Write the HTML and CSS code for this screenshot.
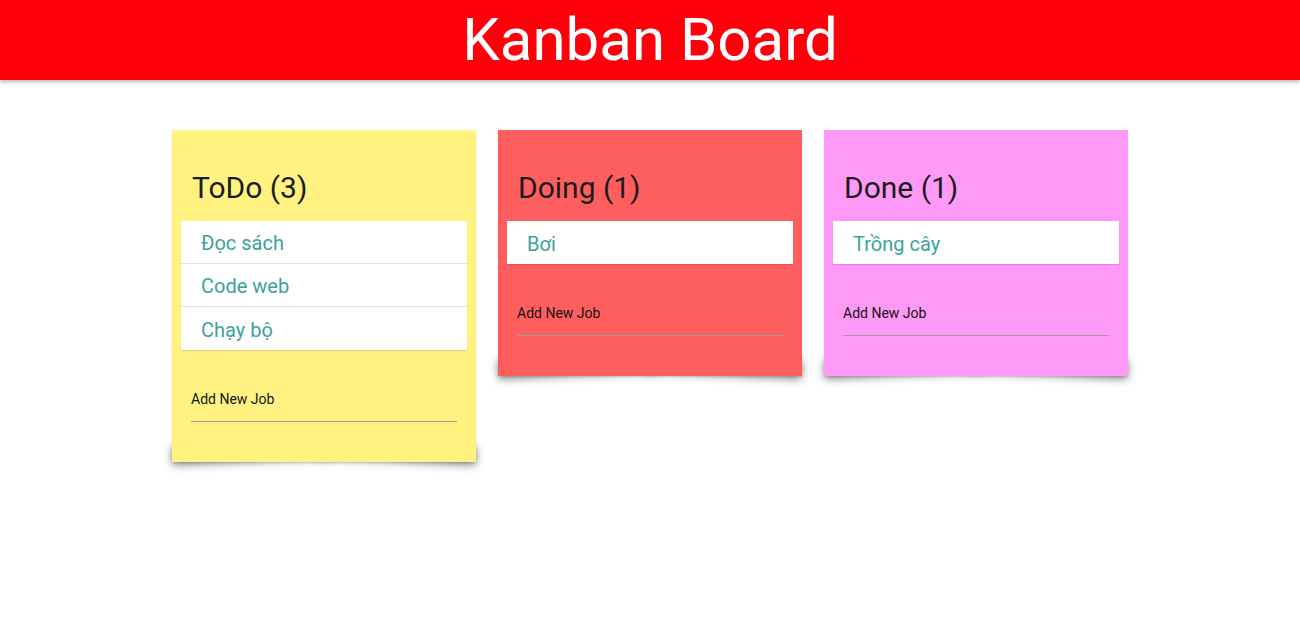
FILE: index.html
```html
<!DOCTYPE html>
<html lang="vi">
<head>
<meta charset="utf-8">
<title>Kanban Board</title>
<link rel="stylesheet" href="styles.css">
</head>
<body>
<header class="topbar"><h1 class="topbar-title">Kanban Board</h1></header>
<main class="board">
  <section class="card card-todo">
    <h2 class="card-title">ToDo (3)</h2>
    <ul class="collection">
      <li class="collection-item">Đọc sách</li>
      <li class="collection-item">Code web</li>
      <li class="collection-item">Chạy bộ</li>
    </ul>
    <div class="input-field">
      <label class="input-label">Add New Job</label>
      <div class="input-line"></div>
    </div>
  </section>
  <section class="card card-doing">
    <h2 class="card-title">Doing (1)</h2>
    <ul class="collection">
      <li class="collection-item">Bơi</li>
    </ul>
    <div class="input-field">
      <label class="input-label">Add New Job</label>
      <div class="input-line"></div>
    </div>
  </section>
  <section class="card card-done">
    <h2 class="card-title">Done (1)</h2>
    <ul class="collection">
      <li class="collection-item">Trồng cây</li>
    </ul>
    <div class="input-field">
      <label class="input-label">Add New Job</label>
      <div class="input-line"></div>
    </div>
  </section>
</main>
</body>
</html>
```
FILE: styles.css
```css
* { box-sizing: border-box; }
html, body { margin: 0; padding: 0; }
html { background: #fff; }
body { font-family: Roboto, "Noto Sans", sans-serif; }

.topbar {
  height: 80px;
  background: #ff000a;
  box-shadow: 0 2px 4px rgba(0,0,0,0.28);
  display: flex;
  align-items: center;
  justify-content: center;
  position: relative;
  z-index: 2;
}
.topbar-title {
  margin: 0;
  color: #fff;
  font-weight: 400;
  font-size: 60px;
  line-height: 80px;
}

.board {
  display: flex;
  justify-content: center;
  align-items: flex-start;
  gap: 22px;
  padding: 50px 0 60px;
  position: relative;
  z-index: 0;
}

.card {
  width: 304px;
  padding: 0 9px 40px;
  position: relative;
  box-shadow: 0 1px 2px rgba(0,0,0,0.12);
}
.card::before, .card::after {
  content: "";
  position: absolute;
  z-index: -1;
  bottom: 12px;
  width: 52%;
  height: 16px;
  background: #888;
  box-shadow: 0 14px 8px 1px rgba(0,0,0,0.5);
}
.card::before { left: 1px; transform: rotate(-2.5deg); transform-origin: left bottom; }
.card::after { right: 1px; transform: rotate(2.5deg); transform-origin: right bottom; }

.card-todo { background: #fff281; }
.card-doing { background: #ff5e5e; }
.card-done { background: #ff99f7; }

.card-title {
  margin: 40px 11px 15px;
  font-size: 30px;
  line-height: 36px;
  font-weight: 400;
  color: #1c1c1c;
}

.collection {
  list-style: none;
  margin: 0;
  padding: 0;
  background: #fff;
  box-shadow: 0 1px 1px rgba(0,0,0,0.12);
}
.collection-item {
  height: 43px;
  padding: 2px 20px 0;
  display: flex;
  align-items: center;
  font-size: 20px;
  color: #3aa39a;
  border-bottom: 1px solid #e0e0e0;
}
.collection-item:last-child { border-bottom: none; }

.input-field {
  margin: 39px 10px 0;
}
.input-label {
  display: block;
  font-size: 14px;
  line-height: 20px;
  color: #141414;
}
.input-line {
  height: 13px;
  border-bottom: 1px solid #9e9e9e;
}
```
